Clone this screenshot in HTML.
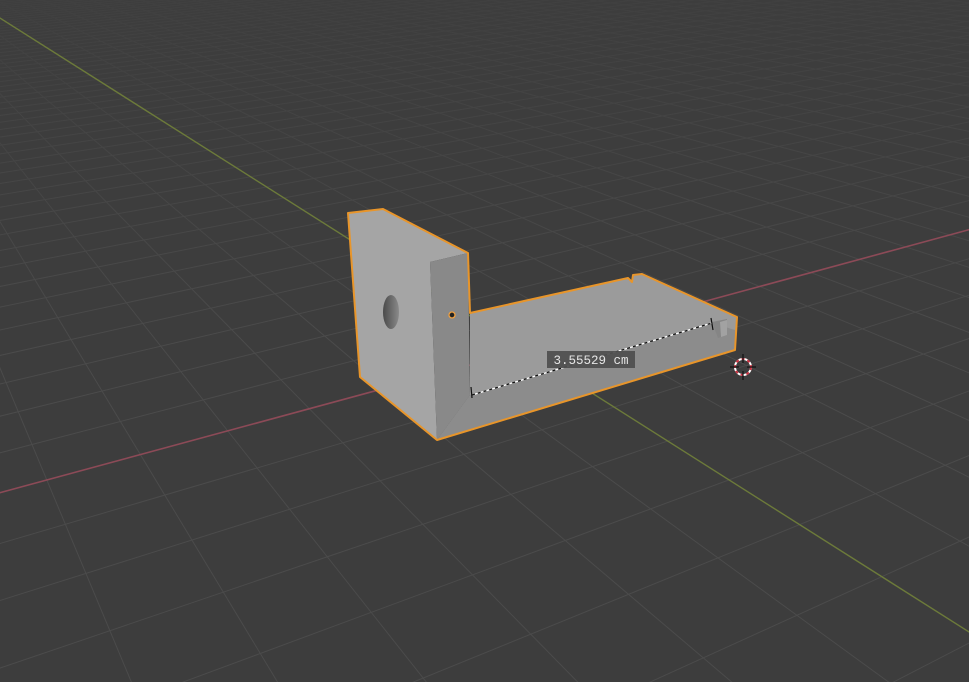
<!DOCTYPE html>
<html><head><meta charset="utf-8"><style>
html,body{margin:0;padding:0;background:#3d3d3d;overflow:hidden;width:969px;height:682px}
svg{display:block}
</style></head><body>
<svg id="s" width="969" height="682" viewBox="0 0 969 682" xmlns="http://www.w3.org/2000/svg">
<defs>
<linearGradient id="fade" x1="0" y1="0" x2="0" y2="1">
<stop offset="0" stop-color="#3d3d3d" stop-opacity="0.75"/>
<stop offset="0.3" stop-color="#3d3d3d" stop-opacity="0.3"/>
<stop offset="0.5" stop-color="#3d3d3d" stop-opacity="0"/>
</linearGradient>
<linearGradient id="h" x1="0" y1="0" x2="1" y2="0"><stop offset="0" stop-color="#4a4a4a"/><stop offset="1" stop-color="#8a8a8a"/></linearGradient>
</defs>
<rect width="969" height="682" fill="#3d3d3d"/>
<g id="grid" stroke="#4b4b4b" stroke-width="1" fill="none"></g>
<rect width="969" height="682" fill="url(#fade)"/>
<line x1="-10" y1="495.4" x2="980" y2="226.7" stroke="#8c4a57" stroke-width="1.6"/>
<line x1="-10" y1="11.7" x2="980" y2="638.9" stroke="#6c7a3a" stroke-width="1.4"/>
<g stroke-linejoin="round">
<polygon points="470,313 628,278 632,282 633,275 642,274 737,317 735,350 437,440 470,395" fill="#9b9b9b"/>
<polygon points="470,395 712,323 735,330 735,350 437,440" fill="#8c8c8c"/>
<polygon points="712,322 727,319 727,335 718,338" fill="#858585"/>
<polygon points="720,322 727,320 727,335 721,337" fill="#a2a2a2"/>
<polygon points="348,213 383,209 468,253 430,262 437,440 360,377" fill="#a5a5a5"/>
<polygon points="430,262 468,253 470,395 437,440" fill="#898989"/>
<ellipse cx="391" cy="312" rx="8" ry="17" fill="url(#h)"/>
<polygon points="348,213 383,209 468,253 470,313 628,278 632,282 633,275 642,274 737,317 735,350 437,440 360,377" fill="none" stroke="#e8952a" stroke-width="2"/>
<line x1="472" y1="395" x2="712" y2="323" stroke="#fff" stroke-width="1.3"/>
<line x1="472" y1="395" x2="712" y2="323" stroke="#111" stroke-width="1.3" stroke-dasharray="3,3"/>
<line x1="471" y1="387" x2="472" y2="398" stroke="#111" stroke-width="1.2"/>
<line x1="711" y1="318" x2="713" y2="330" stroke="#111" stroke-width="1.2"/>
<circle cx="452" cy="315" r="3" fill="#222" stroke="#f0a040" stroke-width="1.3"/>
</g>
<rect x="547" y="351" width="88" height="17" fill="#505050" opacity="0.95"/>
<text x="591" y="364" text-anchor="middle" font-family="Liberation Mono, monospace" font-size="12.5" fill="#e6e6e6">3.55529 cm</text>
<g transform="translate(743,367)">
<circle r="8" fill="none" stroke="#fff" stroke-width="2"/>
<circle r="8" fill="none" stroke="#c83040" stroke-width="2" stroke-dasharray="3,3"/>
<line x1="0" y1="-13" x2="0" y2="-4" stroke="#111" stroke-width="1.2"/>
<line x1="0" y1="4" x2="0" y2="13" stroke="#111" stroke-width="1.2"/>
<line x1="-13" y1="0" x2="-4" y2="0" stroke="#111" stroke-width="1.2"/>
<line x1="4" y1="0" x2="13" y2="0" stroke="#111" stroke-width="1.2"/>
</g>
</svg>
<script>
(function(){
var g=document.getElementById('grid');
var a=0.03,b=0.055;
var X1=2700,Y1=-250,X2=-200,Y2=-110,X0=525,Y0=350;
function P(u,v){var w=1+a*u+b*v;return [(X1*a*u+X2*b*v+X0)/w,(Y1*a*u+Y2*b*v+Y0)/w];}
var s='';
for(var u=-60;u<=150;u++){
  if(u===0)continue;
  var v0=(-(1+a*u)+0.01)/b, v1=400;
  var p=P(u,v0),q=P(u,v1);
  s+='<line x1="'+p[0].toFixed(1)+'" y1="'+p[1].toFixed(1)+'" x2="'+q[0].toFixed(1)+'" y2="'+q[1].toFixed(1)+'"/>';
}
for(var v=-40;v<=150;v++){
  if(v===0)continue;
  var u0=(-(1+b*v)+0.01)/a, u1=400;
  var p=P(u0,v),q=P(u1,v);
  s+='<line x1="'+p[0].toFixed(1)+'" y1="'+p[1].toFixed(1)+'" x2="'+q[0].toFixed(1)+'" y2="'+q[1].toFixed(1)+'"/>';
}
g.innerHTML=s;
})();
</script>
</body></html>
